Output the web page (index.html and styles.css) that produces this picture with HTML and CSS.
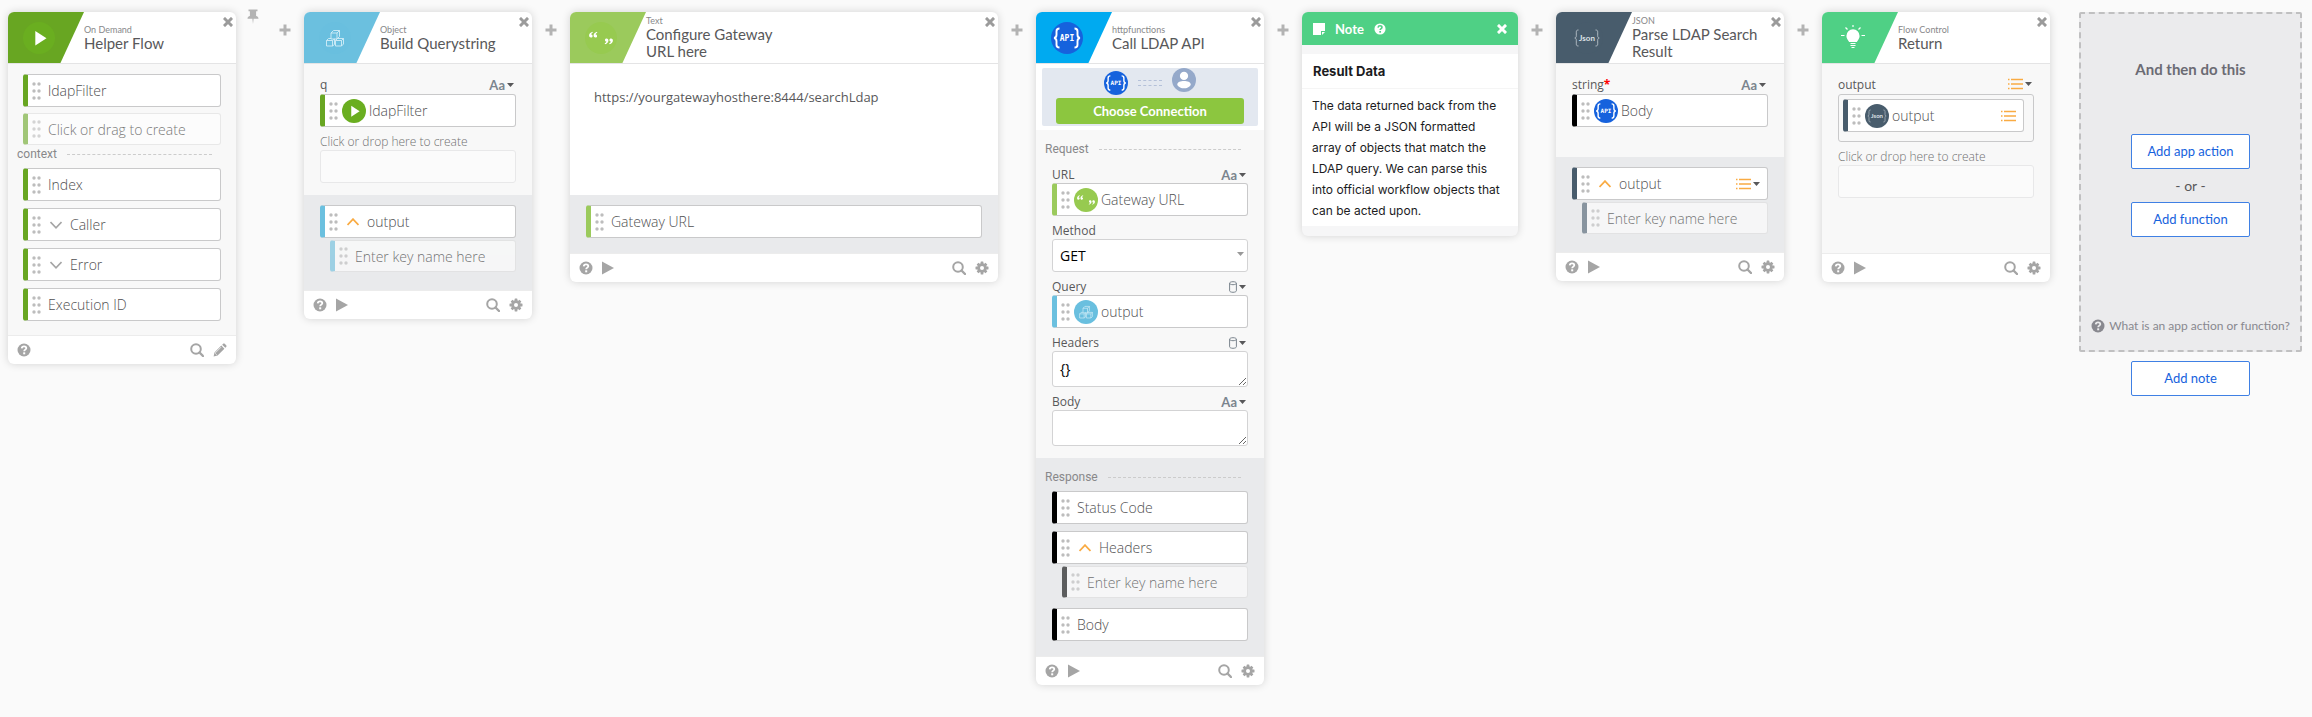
FILE: index.html
```html
<!DOCTYPE html>
<html lang="en">
<head>
<meta charset="utf-8">
<title>Helper Flow</title>
<link rel="stylesheet" href="styles.css">
</head>
<body>
<svg class="sprite" aria-hidden="true">
  <symbol id="i-close" viewBox="0 0 10 10"><path d="M2 2l6 6M8 2l-6 6" stroke="currentColor" stroke-width="3" stroke-linecap="square" fill="none"/></symbol>
  <symbol id="i-plus" viewBox="0 0 12 12"><path d="M6 .5v11M.5 6h11" stroke="currentColor" stroke-width="3" fill="none"/></symbol>
  <symbol id="i-pin" viewBox="0 0 12 16"><path d="M1.500 0.500h9v1.800h-1.400v4.600c1.500.3 2.400 1.300 2.400 2.800H6.600L6 15l-.6-5.300H.5c0-1.500.9-2.500 2.400-2.800V2.300H1.500z" fill="currentColor"/></symbol>
  <symbol id="i-help" viewBox="0 0 14 14"><circle cx="7" cy="7" r="6.500" fill="currentColor"/><path d="M4.700 5.300c.2-1.500 1.100-2 2.300-2 1.400 0 2.300.8 2.300 1.900 0 1.400-2.100 1.500-2.100 3" stroke="var(--hole,#fff)" stroke-width="1.800" fill="none"/><rect x="6.200" y="9.300" width="2" height="2" fill="var(--hole,#fff)"/></symbol>
  <symbol id="i-run" viewBox="0 0 12 14"><path d="M0 .5l12 6.500-12 6.500z" fill="currentColor"/></symbol>
  <symbol id="i-search" viewBox="0 0 14 14"><circle cx="6" cy="6" r="4.800" stroke="currentColor" stroke-width="2" fill="none"/><path d="M9.500 9.500l3.500 3.500" stroke="currentColor" stroke-width="2.400" stroke-linecap="round"/></symbol>
  <symbol id="i-gear" viewBox="0 0 14 14"><g fill="currentColor"><rect x="5.600" y=".5" width="2.800" height="13" rx=".4"/><rect x=".5" y="5.600" width="13" height="2.800" rx=".4"/><rect x="5.600" y=".8" width="2.800" height="12.400" rx=".4" transform="rotate(45 7 7)"/><rect x="5.600" y=".8" width="2.800" height="12.400" rx=".4" transform="rotate(-45 7 7)"/><circle cx="7" cy="7" r="4.700"/></g><circle cx="7" cy="7" r="2" fill="#fff"/></symbol>
  <symbol id="i-pencil" viewBox="0 0 14 14"><path d="M.6 13.400l.9-4 6.800-6.800 3.100 3.100-6.800 6.800zM9.200 1.700l.9-.9c.5-.5 1.100-.5 1.600 0l1.500 1.500c.5.5.5 1.100 0 1.600l-.9.9z" fill="currentColor"/><path d="M2.300 9.900l5.800-5.800M2.200 10.300l1.600 1.600" stroke="#fff" stroke-width=".7"/></symbol>
  <symbol id="i-grip" viewBox="0 0 9 18"><g fill="currentColor"><circle cx="2" cy="2" r="1.700"/><circle cx="7" cy="2" r="1.700"/><circle cx="2" cy="9" r="1.700"/><circle cx="7" cy="9" r="1.700"/><circle cx="2" cy="16" r="1.700"/><circle cx="7" cy="16" r="1.700"/></g></symbol>
  <symbol id="i-down" viewBox="0 0 12 8"><path d="M.5 1L6 6.800 11.500 1" stroke="currentColor" stroke-width="1.600" fill="none"/></symbol>
  <symbol id="i-up" viewBox="0 0 12 8"><path d="M.5 7L6 1.200 11.500 7" stroke="currentColor" stroke-width="1.800" fill="none"/></symbol>
  <symbol id="i-caret" viewBox="0 0 7 4"><path d="M0 0h7L3.500 4z" fill="currentColor"/></symbol>
  <symbol id="i-list" viewBox="0 0 15 12"><path d="M0 1.500h1.500M0 6h1.500M0 10.500h1.500M3 1.500h12M3 6h12M3 10.500h12" stroke="currentColor" stroke-width="1.300"/></symbol>
  <symbol id="i-object" viewBox="0 0 8 12"><path d="M.6 2.200v7.600c0 .8 1.500 1.500 3.400 1.500s3.400-.7 3.400-1.500V2.200M.6 2.200C.6 1.300 2.100.7 4 .7s3.400.6 3.400 1.500S5.900 3.700 4 3.700.6 3.100.6 2.200z" stroke="currentColor" stroke-width="1" fill="none"/></symbol>
  <symbol id="i-note" viewBox="0 0 12 12"><path d="M0 0h12v8H8v4H0z" fill="currentColor"/><path d="M9 9h3l-3 3z" fill="currentColor"/></symbol>
  <symbol id="l-play" viewBox="0 0 32 32"><circle cx="16" cy="16" r="16" fill="#6aae20"/><path d="M12.300 9v14.500L23.500 16.200z" fill="#fff"/></symbol>
  <symbol id="l-cubes" viewBox="0 0 32 32"><circle cx="16" cy="16" r="16" fill="#69bfdf"/><g stroke="#d3edf7" stroke-width=".9" fill="none" stroke-linejoin="round"><path d="M12 11h6v6h-6zM12 11l2.500-2.500h6L18 11M20.500 8.500v6L18 17M7.500 18.500h6v5.500h-6zM7.500 18.500L9.500 16.500H12M16.500 18.500h6v5.500h-6zM13.500 18.500l2-1.500v5.500l-2 1.500M16.500 18.500l2-2h6l-2 2M24.500 16.500v5.500l-2 2"/></g></symbol>
  <symbol id="l-quotes" viewBox="0 0 32 32"><circle cx="16" cy="16" r="16" fill="#97ca50"/><g fill="#fff"><path id="q" d="M7.500 9.800c-2.200.7-3.400 2.100-3.400 3.800 0 1.200.7 2 1.800 2 1 0 1.700-.7 1.700-1.600s-.6-1.500-1.500-1.500c.1-.8.700-1.400 1.700-1.800zM12 9.800c-2.200.7-3.400 2.100-3.400 3.800 0 1.200.7 2 1.800 2 1 0 1.700-.7 1.700-1.600s-.6-1.500-1.500-1.500c.1-.8.700-1.400 1.700-1.800z"/><use href="#q" transform="rotate(180 16 16)"/></g></symbol>
  <symbol id="l-api" viewBox="0 0 32 32"><circle cx="16" cy="16" r="16" fill="#1662dd"/><path d="M8.500 6.500c-2.300 0-3 .8-3 2.800v3.500c0 2-.6 3-2.500 3.200 1.900.2 2.500 1.200 2.500 3.200v3.500c0 2 .7 2.800 3 2.800M23.500 6.500c2.300 0 3 .8 3 2.800v3.500c0 2 .6 3 2.500 3.200-1.900.2-2.500 1.200-2.500 3.200v3.500c0 2-.7 2.800-3 2.800" stroke="#fff" stroke-width="1.900" fill="none"/><text x="16" y="19" text-anchor="middle" class="logo-api">API</text></symbol>
  <symbol id="l-json" viewBox="0 0 32 32"><circle cx="16" cy="16" r="16" fill="#485c6c"/><path d="M7.500 8c-1.700 0-2.200.6-2.200 2.200v3.600c0 1.400-.4 2-1.500 2.200 1.100.2 1.500.8 1.500 2.200v3.600c0 1.600.5 2.200 2.200 2.200M24.500 8c1.700 0 2.200.6 2.200 2.200v3.600c0 1.400.4 2 1.500 2.200-1.100.2-1.500.8-1.500 2.200v3.600c0 1.600-.5 2.200-2.200 2.200" stroke="#b9c2c9" stroke-width=".9" fill="none"/><text x="16" y="18.500" text-anchor="middle" class="logo-json">Json</text></symbol>
  <symbol id="l-bulb" viewBox="0 0 32 32"><path d="M16 7.300a6.600 6.600 0 0 1 6.600 6.600c0 2.800-1.700 4-2.800 6.100h-7.600c-1.100-2.100-2.800-3.300-2.800-6.100A6.600 6.600 0 0 1 16 7.300z" fill="#fff"/><path d="M13.500 21.500h5M13.500 23.500h5M14.500 25.500h3M16 5V3M7.500 13.500h-3.500M24.500 13.500H28M8.500 5.500l2 2M23.500 5.500l-2 2" stroke="#fff" stroke-width="1.200"/></symbol>
  <symbol id="l-user" viewBox="0 0 32 32"><circle cx="16" cy="16" r="16" fill="#95a9ca"/><circle cx="16" cy="10.500" r="5.500" fill="#fff"/><path d="M7 22.500c0-4 4.500-5.200 9-5.200s9 1.200 9 5.200c-2 2.900-5.300 4.600-9 4.600s-7-1.700-9-4.600z" fill="#fff"/></symbol>
</svg>

<main class="flow">
  <section class="card c-start">
    <header class="head">
      <div class="logo"><svg class="logo-icon"><use href="#l-play"/></svg></div>
      <div class="heading"><p class="kind">On Demand</p><h2 class="title">Helper Flow</h2></div>
      <button class="close" aria-label="Remove"><svg><use href="#i-close"/></svg></button>
    </header>
    <div class="body body-start">
      <div class="chips chips-tight">
        <div class="chip"><svg class="grip"><use href="#i-grip"/></svg><span>ldapFilter</span></div>
        <div class="chip ghost"><svg class="grip"><use href="#i-grip"/></svg><input aria-label="New field" placeholder="Click or drag to create"></div>
      </div>
      <h3 class="divider">context</h3>
      <div class="chips">
        <div class="chip"><svg class="grip"><use href="#i-grip"/></svg><span>Index</span></div>
        <div class="chip"><svg class="grip"><use href="#i-grip"/></svg><button class="fold shut" aria-label="Expand"><svg><use href="#i-down"/></svg></button><span>Caller</span></div>
        <div class="chip"><svg class="grip"><use href="#i-grip"/></svg><button class="fold shut" aria-label="Expand"><svg><use href="#i-down"/></svg></button><span>Error</span></div>
        <div class="chip"><svg class="grip"><use href="#i-grip"/></svg><span>Execution ID</span></div>
      </div>
    </div>
    <footer class="foot">
      <button aria-label="Help"><svg class="ico"><use href="#i-help"/></svg></button>
      <button class="push" aria-label="Search"><svg class="ico"><use href="#i-search"/></svg></button>
      <button aria-label="Edit"><svg class="ico"><use href="#i-pencil"/></svg></button>
    </footer>
  </section>

  <div class="link link-first">
    <button class="pin" aria-label="Pin"><svg><use href="#i-pin"/></svg></button>
    <button class="add" aria-label="Insert step"><svg><use href="#i-plus"/></svg></button>
  </div>

  <section class="card c-object">
    <header class="head">
      <div class="logo"><svg class="logo-icon"><use href="#l-cubes"/></svg></div>
      <div class="heading"><p class="kind">Object</p><h2 class="title">Build Querystring</h2></div>
      <button class="close" aria-label="Remove"><svg><use href="#i-close"/></svg></button>
    </header>
    <div class="body fields">
      <div class="field">
        <div class="label-row"><span>q</span><button class="type" aria-label="Type: text">Aa<svg class="caret"><use href="#i-caret"/></svg></button></div>
        <div class="chip c-start"><svg class="grip"><use href="#i-grip"/></svg><svg class="source"><use href="#l-play"/></svg><span>ldapFilter</span></div>
      </div>
      <div class="field drop">
        <label for="drop-q">Click or drop here to create</label>
        <input id="drop-q" class="dropbox">
      </div>
    </div>
    <div class="outputs">
      <div class="chip"><svg class="grip"><use href="#i-grip"/></svg><button class="fold" aria-label="Collapse"><svg><use href="#i-up"/></svg></button><span>output</span></div>
      <div class="chip ghost sub"><svg class="grip"><use href="#i-grip"/></svg><input aria-label="Key name" placeholder="Enter key name here"></div>
    </div>
    <footer class="foot">
      <button aria-label="Help"><svg class="ico"><use href="#i-help"/></svg></button>
      <button aria-label="Run"><svg class="ico run"><use href="#i-run"/></svg></button>
      <button class="push" aria-label="Search"><svg class="ico"><use href="#i-search"/></svg></button>
      <button aria-label="Settings"><svg class="ico"><use href="#i-gear"/></svg></button>
    </footer>
  </section>

  <div class="link"><button class="add" aria-label="Insert step"><svg><use href="#i-plus"/></svg></button></div>

  <section class="card wide c-text">
    <header class="head">
      <div class="logo"><svg class="logo-icon"><use href="#l-quotes"/></svg></div>
      <div class="heading"><p class="kind">Text</p><h2 class="title">Configure Gateway URL here</h2></div>
      <button class="close" aria-label="Remove"><svg><use href="#i-close"/></svg></button>
    </header>
    <textarea class="compose" aria-label="Text" spellcheck="false">https://yourgatewayhosthere:8444/searchLdap</textarea>
    <div class="outputs short">
      <div class="chip"><svg class="grip"><use href="#i-grip"/></svg><span>Gateway URL</span></div>
    </div>
    <footer class="foot">
      <button aria-label="Help"><svg class="ico"><use href="#i-help"/></svg></button>
      <button aria-label="Run"><svg class="ico run"><use href="#i-run"/></svg></button>
      <button class="push" aria-label="Search"><svg class="ico"><use href="#i-search"/></svg></button>
      <button aria-label="Settings"><svg class="ico"><use href="#i-gear"/></svg></button>
    </footer>
  </section>

  <div class="link"><button class="add" aria-label="Insert step"><svg><use href="#i-plus"/></svg></button></div>

  <section class="card c-http">
    <header class="head">
      <div class="logo"><svg class="logo-icon"><use href="#l-api"/></svg></div>
      <div class="heading"><p class="kind">httpfunctions</p><h2 class="title">Call LDAP API</h2></div>
      <button class="close" aria-label="Remove"><svg><use href="#i-close"/></svg></button>
    </header>
    <div class="connect">
      <div class="connect-box">
        <div class="pair"><svg class="source api"><use href="#l-api"/></svg><i class="wire"></i><svg class="source"><use href="#l-user"/></svg></div>
        <button class="choose">Choose Connection</button>
      </div>
    </div>
    <div class="body request">
      <h3 class="divider">Request</h3>
      <div class="field-list">
        <div class="field">
          <div class="label-row"><span>URL</span><button class="type" aria-label="Type: text">Aa<svg class="caret"><use href="#i-caret"/></svg></button></div>
          <div class="chip c-text"><svg class="grip"><use href="#i-grip"/></svg><svg class="source"><use href="#l-quotes"/></svg><span>Gateway URL</span></div>
        </div>
        <div class="field">
          <div class="label-row"><label for="method">Method</label></div>
          <div class="select"><select id="method"><option>GET</option></select><svg class="caret"><use href="#i-caret"/></svg></div>
        </div>
        <div class="field">
          <div class="label-row"><span>Query</span><button class="type" aria-label="Type: object"><svg class="obj"><use href="#i-object"/></svg><svg class="caret"><use href="#i-caret"/></svg></button></div>
          <div class="chip c-object"><svg class="grip"><use href="#i-grip"/></svg><svg class="source"><use href="#l-cubes"/></svg><span>output</span></div>
        </div>
        <div class="field">
          <div class="label-row"><label for="headers">Headers</label><button class="type" aria-label="Type: object"><svg class="obj"><use href="#i-object"/></svg><svg class="caret"><use href="#i-caret"/></svg></button></div>
          <textarea id="headers" class="area" spellcheck="false">{}</textarea>
        </div>
        <div class="field">
          <div class="label-row"><label for="payload">Body</label><button class="type" aria-label="Type: text">Aa<svg class="caret"><use href="#i-caret"/></svg></button></div>
          <textarea id="payload" class="area"></textarea>
        </div>
      </div>
    </div>
    <div class="outputs response">
      <h3 class="divider">Response</h3>
      <div class="chips">
        <div class="chip"><svg class="grip"><use href="#i-grip"/></svg><span>Status Code</span></div>
        <div class="group">
          <div class="chip"><svg class="grip"><use href="#i-grip"/></svg><button class="fold" aria-label="Collapse"><svg><use href="#i-up"/></svg></button><span>Headers</span></div>
          <div class="chip ghost sub"><svg class="grip"><use href="#i-grip"/></svg><input aria-label="Key name" placeholder="Enter key name here"></div>
        </div>
        <div class="chip"><svg class="grip"><use href="#i-grip"/></svg><span>Body</span></div>
      </div>
    </div>
    <footer class="foot">
      <button aria-label="Help"><svg class="ico"><use href="#i-help"/></svg></button>
      <button aria-label="Run"><svg class="ico run"><use href="#i-run"/></svg></button>
      <button class="push" aria-label="Search"><svg class="ico"><use href="#i-search"/></svg></button>
      <button aria-label="Settings"><svg class="ico"><use href="#i-gear"/></svg></button>
    </footer>
  </section>

  <div class="link"><button class="add" aria-label="Insert step"><svg><use href="#i-plus"/></svg></button></div>

  <section class="card note">
    <header class="note-head">
      <svg class="note-icon"><use href="#i-note"/></svg>
      <h2>Note</h2>
      <button aria-label="Help"><svg class="note-help"><use href="#i-help"/></svg></button>
      <button class="push" aria-label="Remove"><svg class="note-close"><use href="#i-close"/></svg></button>
    </header>
    <div class="note-body">
      <h3>Result Data</h3>
      <p>The data returned back from the API will be a JSON formatted array of objects that match the LDAP query. We can parse this into official workflow objects that can be acted upon.</p>
    </div>
  </section>

  <div class="link"><button class="add" aria-label="Insert step"><svg><use href="#i-plus"/></svg></button></div>

  <section class="card c-json">
    <header class="head">
      <div class="logo"><svg class="logo-icon"><use href="#l-json"/></svg></div>
      <div class="heading"><p class="kind">JSON</p><h2 class="title">Parse LDAP Search Result</h2></div>
      <button class="close" aria-label="Remove"><svg><use href="#i-close"/></svg></button>
    </header>
    <div class="body fields tail">
      <div class="field">
        <div class="label-row"><span>string<b class="required">*</b></span><button class="type" aria-label="Type: text">Aa<svg class="caret"><use href="#i-caret"/></svg></button></div>
        <div class="chip c-http"><svg class="grip"><use href="#i-grip"/></svg><svg class="source"><use href="#l-api"/></svg><span>Body</span></div>
      </div>
    </div>
    <div class="outputs">
      <div class="chip"><svg class="grip"><use href="#i-grip"/></svg><button class="fold" aria-label="Collapse"><svg><use href="#i-up"/></svg></button><span>output</span><button class="type push" aria-label="Type: list"><svg class="list"><use href="#i-list"/></svg><svg class="caret"><use href="#i-caret"/></svg></button></div>
      <div class="chip ghost sub"><svg class="grip"><use href="#i-grip"/></svg><input aria-label="Key name" placeholder="Enter key name here"></div>
    </div>
    <footer class="foot">
      <button aria-label="Help"><svg class="ico"><use href="#i-help"/></svg></button>
      <button aria-label="Run"><svg class="ico run"><use href="#i-run"/></svg></button>
      <button class="push" aria-label="Search"><svg class="ico"><use href="#i-search"/></svg></button>
      <button aria-label="Settings"><svg class="ico"><use href="#i-gear"/></svg></button>
    </footer>
  </section>

  <div class="link"><button class="add" aria-label="Insert step"><svg><use href="#i-plus"/></svg></button></div>

  <section class="card c-return">
    <header class="head">
      <div class="logo"><svg class="logo-icon"><use href="#l-bulb"/></svg></div>
      <div class="heading"><p class="kind">Flow Control</p><h2 class="title">Return</h2></div>
      <button class="close" aria-label="Remove"><svg><use href="#i-close"/></svg></button>
    </header>
    <div class="body fields last">
      <div class="field">
        <div class="label-row"><span>output</span><button class="type" aria-label="Type: list"><svg class="list"><use href="#i-list"/></svg><svg class="caret"><use href="#i-caret"/></svg></button></div>
        <div class="nest"><div class="chip c-json"><svg class="grip"><use href="#i-grip"/></svg><svg class="source"><use href="#l-json"/></svg><span>output</span><svg class="list push"><use href="#i-list"/></svg></div></div>
      </div>
      <div class="field drop">
        <label for="drop-out">Click or drop here to create</label>
        <input id="drop-out" class="dropbox">
      </div>
    </div>
    <footer class="foot">
      <button aria-label="Help"><svg class="ico"><use href="#i-help"/></svg></button>
      <button aria-label="Run"><svg class="ico run"><use href="#i-run"/></svg></button>
      <button class="push" aria-label="Search"><svg class="ico"><use href="#i-search"/></svg></button>
      <button aria-label="Settings"><svg class="ico"><use href="#i-gear"/></svg></button>
    </footer>
  </section>

  <aside class="next">
    <div class="next-box">
      <h2>And then do this</h2>
      <div class="choices">
        <button class="outline">Add app action</button>
        <span>- or -</span>
        <button class="outline">Add function</button>
      </div>
      <a class="what" href="#"><svg class="ico"><use href="#i-help"/></svg>What is an app action or function?</a>
    </div>
    <button class="outline">Add note</button>
  </aside>
</main>
</body>
</html>
```
FILE: styles.css
```css
* { box-sizing: border-box; }

body {
  margin: 0;
  background: #fafafa;
  color: #58585a;
  font-family: "Open Sans", "Noto Sans", sans-serif;
  font-size: 12px;
}

h2, h3, p { margin: 0; font-weight: 400; }
svg { display: block; flex: none; }
.sprite { display: none; }

button {
  margin: 0;
  padding: 0;
  border: 0;
  background: none;
  color: inherit;
  font: inherit;
  cursor: pointer;
}

.push { margin-left: auto; }

.flow {
  display: flex;
  align-items: flex-start;
  padding: 12px 10px 12px 8px;
}

/* Step accents */
.c-start { --accent: #68a622; --logo: #68a622; }
.c-object { --accent: #6bc0df; --logo: #6bc0df; }
.c-text { --accent: #9bca5c; --logo: #9bca5c; }
.c-http { --accent: #000; --logo: #00aaf0; }
.c-json { --accent: #485c6c; --logo: #485c6c; }
.c-return { --accent: #4fd085; --logo: #4fd085; }

/* Cards */
.card {
  flex: none;
  width: 228px;
  overflow: hidden;
  border-radius: 6px;
  background: #fff;
  box-shadow: 0 0 8px rgba(0, 0, 0, .16);
}
.card.wide { flex: 1 1 228px; }

.head {
  display: flex;
  height: 52px;
  border-bottom: 1px solid #e4e4e5;
}
.logo {
  display: flex;
  align-items: center;
  width: 76px;
  padding-left: 15px;
  background: var(--logo);
  clip-path: polygon(0 0, 100% 0, 69% 100%, 0 100%);
}
.logo-icon { width: 32px; height: 32px; }
.logo-api { font: 700 8px "DejaVu Sans Mono", monospace; fill: #fff; }
.logo-json { font: 700 8px Lato, sans-serif; fill: #dde2e6; }
.heading { flex: 1; align-self: center; font-family: Lato, sans-serif; }
.kind { color: #88888a; font-size: 9px; line-height: 11px; }
.title { max-width: 132px; color: #58585a; font-size: 15px; line-height: 17px; }
.close { align-self: flex-start; padding: 5px 3px; color: #9b9b9b; }
.close svg { width: 10px; height: 10px; }

.body { background: #f8f8f8; }
.body-start { padding: 10px 15px 14px; }
.fields { padding: 14px 16px 12px; }
.tail { padding-bottom: 30px; }
.last { padding-bottom: 55px; }

.foot {
  display: flex;
  align-items: center;
  gap: 9px;
  height: 29px;
  padding: 0 9px;
  border-top: 1px solid #ececec;
  color: #a5a5a5;
}
.ico { width: 14px; height: 14px; }
.run { width: 12px; }

/* Field chips */
.chips { display: flex; flex-direction: column; gap: 7px; }
.chips-tight { gap: 6px; }
.chip {
  display: flex;
  align-items: center;
  height: 33px;
  padding-right: 7px;
  border: 1px solid #c9c9ca;
  border-left: 5px solid var(--accent);
  border-radius: 3px;
  background: #fff;
  color: #505052;
  font-size: 14px;
  font-weight: 300;
}
.grip { width: 9px; height: 18px; margin: 0 7px 0 4px; color: #bdbdbd; }
.source { width: 24px; height: 24px; margin: 0 3px 0 -3px; }
.fold { display: flex; padding: 0 8px 0 2px; color: #f9ab43; }
.fold svg { width: 12px; height: 8px; }
.fold.shut { color: #a5a5a5; }
.chip input {
  flex: 1;
  min-width: 0;
  padding: 0;
  border: 0;
  outline: 0;
  background: none;
  color: inherit;
  font: inherit;
}
.chip input::placeholder { color: #222; opacity: 1; }
.ghost {
  height: 32px;
  border-color: #dedede;
  border-left-color: var(--accent);
  opacity: .6;
}
.sub { margin: 2px 0 0 10px; }

.divider {
  display: flex;
  align-items: center;
  gap: 10px;
  color: #88888a;
  font: 400 12px/16px Roboto, sans-serif;
}
.divider::after { content: ""; flex: 1; border-top: 1px dashed #ccc; }
.body-start .divider { margin: 1px 9px 6px -6px; }

/* Inputs */
.label-row {
  display: flex;
  align-items: center;
  justify-content: space-between;
  height: 16px;
  line-height: 16px;
}
.fields .label-row { align-items: flex-start; line-height: 14px; }
.type { display: flex; align-items: center; gap: 2px; color: #7b858e; font: 700 13px/14px Lato, sans-serif; }
.type .list { color: #f9ab43; }
.label-row .type { padding-right: 2px; }
.caret { width: 7px; height: 4px; color: #58585a; }
.obj { width: 8px; height: 12px; }
.list { width: 15px; height: 12px; color: #f9ab43; }
.required { color: #f00; }
.drop { padding-top: 6px; }
.drop label { display: block; color: #707071; font-weight: 300; line-height: 17px; }
.dropbox {
  display: block;
  width: 100%;
  height: 33px;
  border: 1px solid #e8e8e9;
  border-radius: 3px;
  background: #fbfbfb;
}
.nest { padding: 4px 9px 9px 4px; border: 1px solid #c9c9ca; border-radius: 3px; }

.outputs { padding: 10px 16px 18px; background: #e9eaec; }
.short { padding-bottom: 15px; }

.compose {
  display: block;
  width: 100%;
  height: 131px;
  padding: 24px;
  border: 0;
  resize: none;
  color: #58585a;
  font: 400 13px/18px "Open Sans", sans-serif;
}

/* HTTP step */
.connect { padding: 4px 6px; }
.connect-box { padding: 0 14px 2px; border-radius: 2px; background: #e3e8f0; }
.pair { display: flex; align-items: center; justify-content: center; gap: 10px; height: 30px; }
.pair .source { margin: 0 0 6px; }
.pair .api { margin: 0; }
.wire { width: 24px; height: 6px; border: dashed #b4c1d9; border-width: 1px 0; }
.choose {
  display: block;
  width: 100%;
  height: 26px;
  border-radius: 3px;
  background: #8cc63f;
  color: #fff;
  font: 700 13px/22px Lato, sans-serif;
}
.request { padding: 11px 9px 12px; }
.request .divider, .response .divider { margin-right: 14px; }
.field-list { display: flex; flex-direction: column; gap: 7px; padding: 10px 7px 0; }
.select { position: relative; }
.select select, .area {
  display: block;
  width: 100%;
  height: 33px;
  padding: 0 7px;
  border: 1px solid #d3d3d4;
  border-radius: 3px;
  background: #fff;
  color: #000;
  font: 400 14px/20px "Open Sans", sans-serif;
  appearance: none;
}
.select .caret { position: absolute; right: 4px; top: 13px; color: #999; }
.area { height: 36px; padding-top: 7px; overflow: hidden; resize: vertical; }
.response { padding: 11px 9px 15px; }
.response .chips { padding: 6px 7px 0; }
.group { padding-bottom: 3px; }

/* Connectors */
.link { display: flex; flex: none; justify-content: center; width: 38px; padding-top: 12px; color: #b3b3b3; }
.add { height: 12px; }
.add svg { width: 12px; height: 12px; }
.link-first { justify-content: space-between; width: 68px; padding-right: 13px; padding-left: 11px; }
.pin { height: 16px; margin-top: -15px; }
.pin svg { width: 12px; height: 16px; }

/* Note */
.note { width: 216px; padding-bottom: 10px; background: #f6f6f7; font-family: Inter, sans-serif; color: #1c1c1e; }
.note-head { --hole: #4fd085; display: flex; align-items: center; height: 33px; padding: 0 11px; background: #4fd085; color: #fff; }
.note-head h2 { margin: 0 10px; font: 700 13px/20px Lato, sans-serif; }
.note-icon { width: 12px; height: 12px; }
.note-help { width: 12px; height: 12px; }
.note-close { width: 10px; height: 10px; }
.note-body { margin-top: 9px; background: #fff; }
.note-body h3 { padding: 8px 11px; border-bottom: 1px solid #f5f5f5; font-size: 13px; font-weight: 700; line-height: 18px; }
.note-body p { padding: 6px 10px 5px; font-size: 12px; line-height: 21px; }

/* Next step */
.next { display: flex; flex: none; flex-direction: column; align-items: center; gap: 9px; width: 223px; margin-left: 29px; font-family: Lato, sans-serif; }
.next-box {
  display: flex;
  flex-direction: column;
  align-items: center;
  width: 100%;
  padding: 45px 8px 14px;
  border: 2px dashed #c0c0c1;
  border-radius: 2px;
  background: #ebebed;
}
.next-box h2 { color: #6b6b74; font-size: 15px; font-weight: 700; line-height: 20px; }
.choices { display: flex; flex-direction: column; align-items: center; gap: 7px; margin: 55px 0 79px; font-size: 14px; line-height: 19px; }
.outline {
  width: 119px;
  height: 35px;
  padding-bottom: 2px;
  border: 1px solid #3f80e4;
  border-radius: 2px;
  background: #fff;
  color: #1662dd;
  font: 400 13px/20px Lato, sans-serif;
}
.what { --hole: #ebebed; display: flex; align-items: center; gap: 4px; color: #88888f; font-size: 12px; line-height: 20px; text-decoration: none; white-space: nowrap; }
```
